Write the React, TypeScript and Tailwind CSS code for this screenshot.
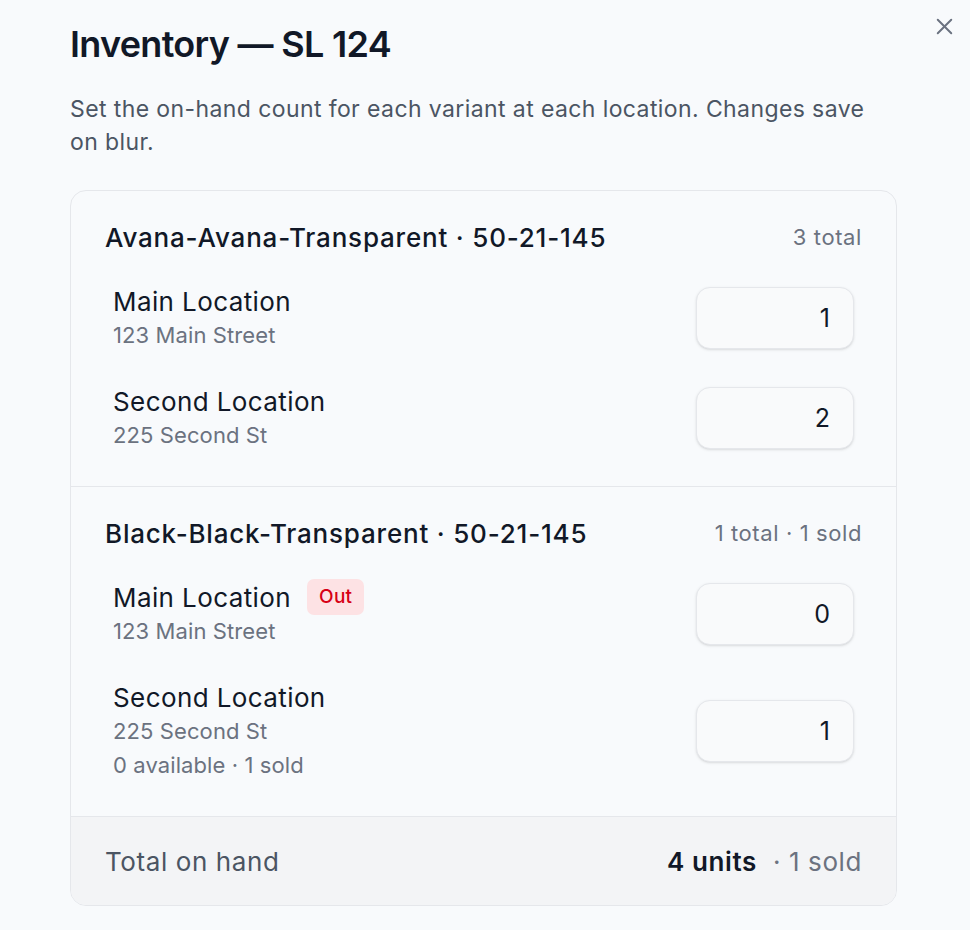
import { X } from "lucide-react";

type Loc = {
  name: string;
  address: string;
  qty: number;
  out?: boolean;
  note?: string;
};

type Variant = {
  title: string;
  summary: string;
  locations: Loc[];
};

const VARIANTS: Variant[] = [
  {
    title: "Avana-Avana-Transparent · 50-21-145",
    summary: "3 total",
    locations: [
      { name: "Main Location", address: "123 Main Street", qty: 1 },
      { name: "Second Location", address: "225 Second St", qty: 2 },
    ],
  },
  {
    title: "Black-Black-Transparent · 50-21-145",
    summary: "1 total · 1 sold",
    locations: [
      { name: "Main Location", address: "123 Main Street", qty: 0, out: true },
      {
        name: "Second Location",
        address: "225 Second St",
        qty: 1,
        note: "0 available · 1 sold",
      },
    ],
  },
];

function LocationRow({ loc }: { loc: Loc }) {
  return (
    <div className="flex items-center justify-between px-2">
      <div className="flex flex-col">
        <div className="flex items-center gap-4 h-[34px]">
          <span className="text-[26px] tracking-[0.4px] text-[#111827]">{loc.name}</span>
          {loc.out && (
            <span className="rounded-[7px] bg-[#fde2e4] px-[12px] h-[36px] flex items-center text-[19px] font-medium tracking-[0.3px] text-[#d70015]">
              Out
            </span>
          )}
        </div>
        <span className="text-[22px] leading-[34px] tracking-[0.1px] text-[#6b7280]">
          {loc.address}
        </span>
        {loc.note && (
          <span className="text-[22px] leading-[34px] tracking-[0.1px] text-[#6b7280]">
            {loc.note}
          </span>
        )}
      </div>
      <input
        defaultValue={loc.qty}
        className="h-[62px] w-[158px] rounded-[14px] border border-[#e5e7eb] bg-[#f9fafb] pr-[23px] text-right text-[25px] text-[#111827] shadow-sm outline-none"
      />
    </div>
  );
}

function VariantSection({ v }: { v: Variant }) {
  return (
    <div className="px-[34px] pt-[29px] pb-[34px]">
      <div className="flex h-[34px] items-center justify-between mb-[30px]">
        <span className="text-[26px] font-medium tracking-[0.8px] text-[#111827]">{v.title}</span>
        <span className="text-[22px] tracking-[0.6px] text-[#6b7280]">{v.summary}</span>
      </div>
      <div className="flex flex-col gap-[32px]">
        {v.locations.map((l) => (
          <LocationRow key={l.name} loc={l} />
        ))}
      </div>
    </div>
  );
}

export default function App() {
  return (
    <div
      className="relative min-h-[930px] w-full bg-[#f8fafc] px-[70px] pt-[22px]"
      style={{ fontFamily: "Inter, 'Noto Sans', sans-serif" }}
    >
      <button className="absolute right-[12px] top-[13px] text-[#6b7280]">
        <X size={27} strokeWidth={1.75} />
      </button>
      <h1 className="text-[36px] font-semibold leading-[44px] text-[#111827] tracking-[-0.7px]">
        Inventory — SL 124
      </h1>
      <p className="mt-[27px] max-w-[826px] text-[23px] leading-[33px] tracking-[0.4px] text-[#4b5563]">
        Set the on-hand count for each variant at each location. Changes save on
        blur.
      </p>
      <div className="mt-[31px] w-[827px] overflow-hidden rounded-[16px] border border-[#e5e7eb]">
        {VARIANTS.map((v, i) => (
          <div key={v.title} className={i > 0 ? "border-t border-[#e5e7eb]" : ""}>
            <VariantSection v={v} />
          </div>
        ))}
        <div className="flex h-[89px] items-center justify-between border-t border-[#e5e7eb] bg-[#f3f4f6] px-[34px]">
          <span className="text-[26px] tracking-[0.6px] text-[#4b5563]">Total on hand</span>
          <span className="text-[26px] tracking-[0.6px] text-[#6b7280]">
            <span className="font-semibold text-[#111827]">4 units</span>
            <span className="ml-4">· 1 sold</span>
          </span>
        </div>
      </div>
    </div>
  );
}
